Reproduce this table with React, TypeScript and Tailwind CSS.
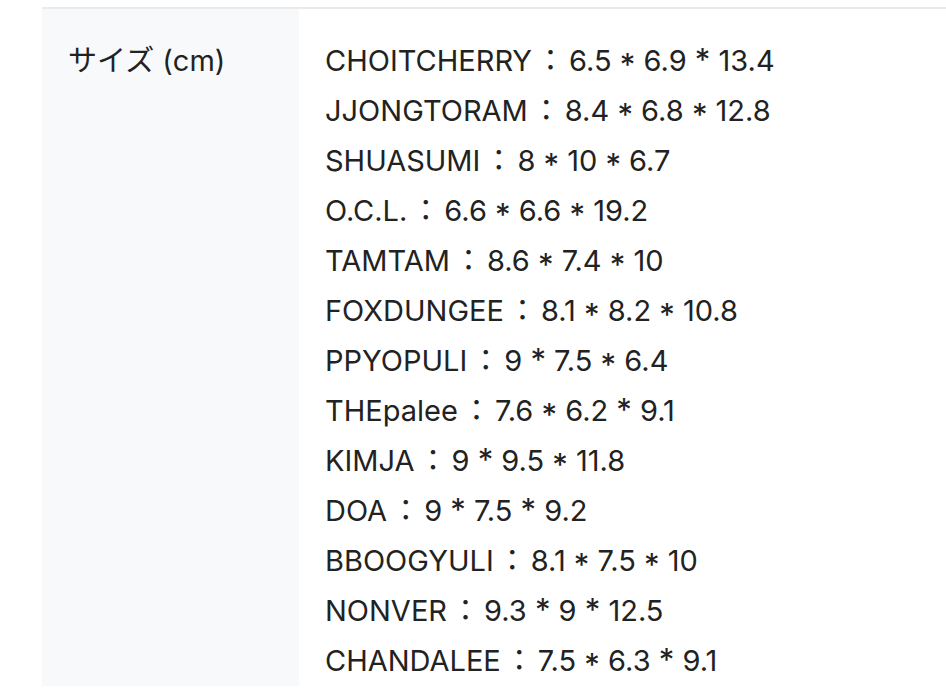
const rows = [
  "CHOITCHERRY：6.5 ∗ 6.9 * 13.4",
  "JJONGTORAM：8.4 ∗ 6.8 ∗ 12.8",
  "SHUASUMI：8 ∗ 10 ∗ 6.7",
  "O.C.L.：6.6 ∗ 6.6 ∗ 19.2",
  "TAMTAM：8.6 ∗ 7.4 ∗ 10",
  "FOXDUNGEE：8.1 ∗ 8.2 ∗ 10.8",
  "PPYOPULI：9 * 7.5 ∗ 6.4",
  "THEpalee：7.6 ∗ 6.2 * 9.1",
  "KIMJA：9 * 9.5 ∗ 11.8",
  "DOA：9 * 7.5 * 9.2",
  "BBOOGYULI：8.1 ∗ 7.5 ∗ 10",
  "NONVER：9.3 * 9 * 12.5",
  "CHANDALEE：7.5 ∗ 6.3 * 9.1",
];

// ∗ marks the lowered asterisk, * the raised one
const Row = ({ text }: { text: string }) => {
  const parts = text.split(/([∗*：])/);
  return (
    <div className="whitespace-pre">
      {parts.map((p, i) =>
        p === "∗" ? (
          <span key={i} className="inline-block translate-y-[5px] text-[31px] leading-none">*</span>
        ) : p === "*" ? (
          <span key={i} className="inline-block text-[31px] leading-none">*</span>
        ) : p === "：" ? (
          <span key={i} className="mx-[4px]">：</span>
        ) : (
          <span key={i}>{p}</span>
        )
      )}
    </div>
  );
};

const App = () => {
  return (
    <div className="min-h-screen bg-white pt-[7px] pl-[42px] text-[#222222] font-['Inter','Noto_Sans_CJK_JP',sans-serif] [font-feature-settings:'calt'_0]">
      <div className="flex border-t-2 border-[#e9eaec]">
        <div className="w-[257px] shrink-0 bg-[#f8f9fb] pl-[26px] pt-[27px] text-[29px] leading-[50px]">
          サイズ (cm)
        </div>
        <div className="flex flex-col pl-[26px] pt-[27px] text-[29px] leading-[50px]">
          {rows.map((r) => (
            <Row key={r} text={r} />
          ))}
        </div>
      </div>
    </div>
  );
};

export default App;
